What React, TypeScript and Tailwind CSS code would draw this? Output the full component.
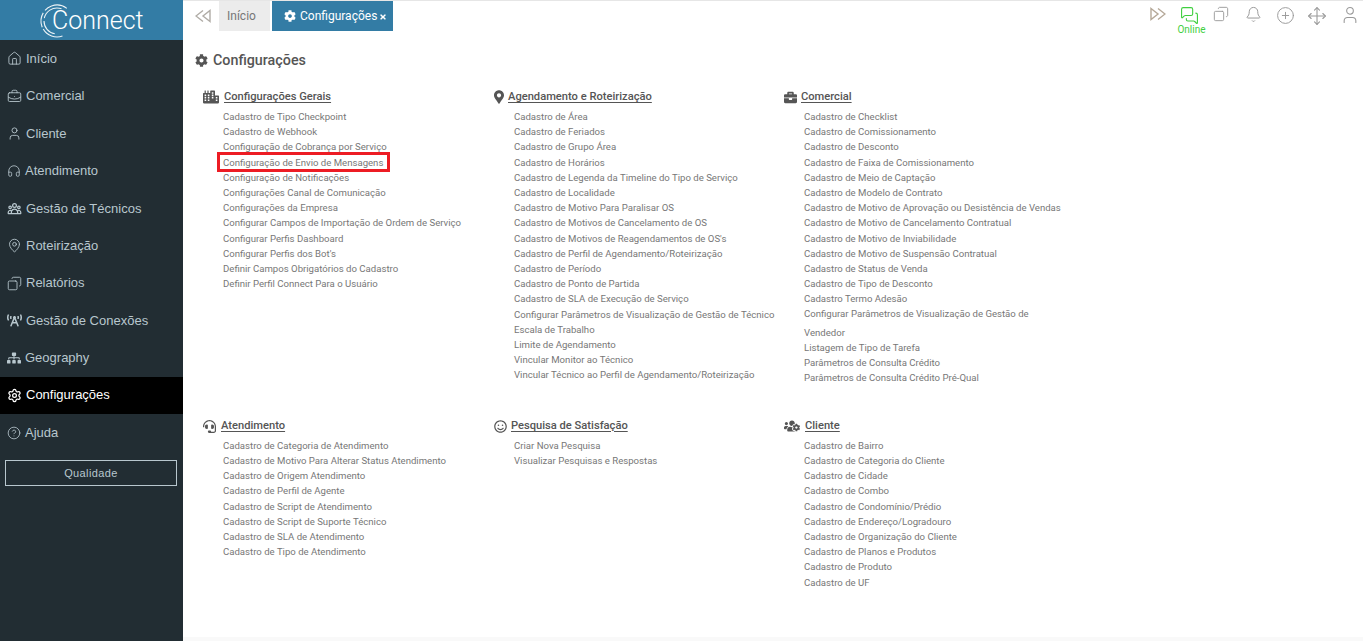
import {
  Home,
  BriefcaseBusiness,
  User,
  Headphones,
  MapPin,
  Copy,
  Settings,
  CircleHelp,
  MessagesSquare,
  Bell,
  CirclePlus,
  Move,
} from "lucide-react";
import {
  FaCog,
  FaCity,
  FaMapMarkerAlt,
  FaBriefcase,
  FaUsersCog,
  FaRegSmile,
  FaHeadset,
  FaTimes,
  FaSitemap,
  FaBroadcastTower,
} from "react-icons/fa";
import { HiOutlineUserGroup } from "react-icons/hi";

const menu = [
  { label: "Início", icon: <Home size={15} strokeWidth={1.4} /> },
  { label: "Comercial", icon: <BriefcaseBusiness size={15} strokeWidth={1.4} /> },
  { label: "Cliente", icon: <User size={15} strokeWidth={1.4} /> },
  { label: "Atendimento", icon: <Headphones size={14} strokeWidth={1.4} /> },
  { label: "Gestão de Técnicos", icon: <HiOutlineUserGroup size={15} /> },
  { label: "Roteirização", icon: <MapPin size={15} strokeWidth={1.4} /> },
  { label: "Relatórios", icon: <Copy size={15} strokeWidth={1.4} className="scale-x-[-1]" /> },
  { label: "Gestão de Conexões", icon: <FaBroadcastTower size={15} /> },
  { label: "Geography", icon: <FaSitemap size={14} /> },
  { label: "Configurações", icon: <Settings size={15} strokeWidth={2} />, active: true },
  { label: "Ajuda", icon: <CircleHelp size={14} strokeWidth={1.4} /> },
];

const sections = [
  {
    title: "Configurações Gerais",
    icon: <FaCity size={16} />,
    links: [
      "Cadastro de Tipo Checkpoint",
      "Cadastro de Webhook",
      "Configuração de Cobrança por Serviço",
      "Configuração de Envio de Mensagens",
      "Configuração de Notificações",
      "Configurações Canal de Comunicação",
      "Configurações da Empresa",
      "Configurar Campos de Importação de Ordem de Serviço",
      "Configurar Perfis Dashboard",
      "Configurar Perfis dos Bot's",
      "Definir Campos Obrigatórios do Cadastro",
      "Definir Perfil Connect Para o Usuário",
    ],
  },
  {
    title: "Agendamento e Roteirização",
    icon: <FaMapMarkerAlt className="-mr-px h-[14px] w-[10px]" />,
    links: [
      "Cadastro de Área",
      "Cadastro de Feriados",
      "Cadastro de Grupo Área",
      "Cadastro de Horários",
      "Cadastro de Legenda da Timeline do Tipo de Serviço",
      "Cadastro de Localidade",
      "Cadastro de Motivo Para Paralisar OS",
      "Cadastro de Motivos de Cancelamento de OS",
      "Cadastro de Motivos de Reagendamentos de OS's",
      "Cadastro de Perfil de Agendamento/Roteirização",
      "Cadastro de Período",
      "Cadastro de Ponto de Partida",
      "Cadastro de SLA de Execução de Serviço",
      "Configurar Parâmetros de Visualização de Gestão de Técnico",
      "Escala de Trabalho",
      "Limite de Agendamento",
      "Vincular Monitor ao Técnico",
      "Vincular Técnico ao Perfil de Agendamento/Roteirização",
    ],
  },
  {
    title: "Comercial",
    icon: <FaBriefcase size={13} className="-mr-px" />,
    links: [
      "Cadastro de Checklist",
      "Cadastro de Comissionamento",
      "Cadastro de Desconto",
      "Cadastro de Faixa de Comissionamento",
      "Cadastro de Meio de Captação",
      "Cadastro de Modelo de Contrato",
      "Cadastro de Motivo de Aprovação ou Desistência de Vendas",
      "Cadastro de Motivo de Cancelamento Contratual",
      "Cadastro de Motivo de Inviabilidade",
      "Cadastro de Motivo de Suspensão Contratual",
      "Cadastro de Status de Venda",
      "Cadastro de Tipo de Desconto",
      "Cadastro Termo Adesão",
      "Configurar Parâmetros de Visualização de Gestão de Vendedor",
      "Listagem de Tipo de Tarefa",
      "Parâmetros de Consulta Crédito",
      "Parâmetros de Consulta Crédito Pré-Qual",
    ],
  },
  {
    title: "Atendimento",
    icon: <FaHeadset size={13} />,
    links: [
      "Cadastro de Categoria de Atendimento",
      "Cadastro de Motivo Para Alterar Status Atendimento",
      "Cadastro de Origem Atendimento",
      "Cadastro de Perfil de Agente",
      "Cadastro de Script de Atendimento",
      "Cadastro de Script de Suporte Técnico",
      "Cadastro de SLA de Atendimento",
      "Cadastro de Tipo de Atendimento",
    ],
  },
  {
    title: "Pesquisa de Satisfação",
    icon: <FaRegSmile size={13} className="-mr-px" />,
    links: ["Criar Nova Pesquisa", "Visualizar Pesquisas e Respostas"],
  },
  {
    title: "Cliente",
    icon: <FaUsersCog size={16} />,
    links: [
      "Cadastro de Bairro",
      "Cadastro de Categoria do Cliente",
      "Cadastro de Cidade",
      "Cadastro de Combo",
      "Cadastro de Condomínio/Prédio",
      "Cadastro de Endereço/Logradouro",
      "Cadastro de Organização do Cliente",
      "Cadastro de Planos e Produtos",
      "Cadastro de Produto",
      "Cadastro de UF",
    ],
  },
];

const DoubleArrow = ({ left }: { left?: boolean }) => (
  <svg width="16" height="16" viewBox="0 0 16 16" fill="none" stroke="currentColor" strokeWidth="1.4" className={left ? "rotate-180" : ""}>
    <path d="M1 2.5 L8 8 L1 13.5 Z" />
    <path d="M8 2.5 L15 8 L8 13.5" />
  </svg>
);

const App = () => {
  return (
    <div className="flex h-[641px] overflow-hidden bg-white font-['Roboto',sans-serif]">
      <aside className="w-[183px] shrink-0 bg-[#222d33] font-['Liberation_Sans',sans-serif]">
        <div className="relative flex h-10 items-center bg-[#337ca5] pl-[52px] font-['Roboto',sans-serif] text-[25px] font-light leading-none text-white">
          <svg width="40" height="40" viewBox="0 0 40 40" fill="none" stroke="#fff" className="absolute left-[37px] top-[1px] opacity-90">
            <circle cx="20" cy="20" r="16" strokeWidth="1.1" strokeDasharray="22 2 15 3 24 35" transform="rotate(70 20 20)" />
            <circle cx="20" cy="20" r="13" strokeWidth="1.1" strokeDasharray="18 3 22 40" transform="rotate(100 20 20)" />
          </svg>
          <span className="relative">Connect</span>
        </div>
        <nav>
          {menu.map((m) => (
            <div
              key={m.label}
              className={`flex h-[37.4px] items-center gap-[4px] pl-[7px] text-[13px] ${
                m.active ? "bg-black text-white" : "text-[#b8c7ce]"
              }`}
            >
              {m.icon}
              <span>{m.label}</span>
            </div>
          ))}
        </nav>
        <div className="ml-[5px] mr-[6px] mt-[9px] flex h-[26px] items-center justify-center border border-[#b8c7ce] text-[11px] tracking-[0.4px] text-[#b8c7ce]">
          Qualidade
        </div>
      </aside>

      <main className="flex min-w-0 flex-1 flex-col">
        <header className="flex h-[31px] shrink-0 items-start border-t border-[#e6e6e6] pl-[12px]">
          <span className="mt-[7px] text-[#b0aca6]">
            <DoubleArrow left />
          </span>
          <div className="ml-[8px] flex h-[30px] w-[51px] items-center bg-[#ececec] pl-2 text-xs text-[#777]">Início</div>
          <div className="ml-[2px] flex h-[30px] w-[121px] items-center gap-[4px] bg-[#337ca5] pl-3 text-xs text-white">
            <FaCog size={12} />
            <span>Configurações</span>
            <FaTimes size={8} className="-ml-[2px] mt-[2px]" />
          </div>
          <div className="ml-auto flex items-start pr-[3px] pt-[5px] text-[#999]">
            <span className="text-[#b5a898]"><DoubleArrow /></span>
            <span className="ml-[12px] flex w-[27px] flex-col items-center text-[#3fcf3f]">
              <MessagesSquare size={19} strokeWidth={1.4} className="-ml-[4px]" />
              <span className="-mt-[1px] text-[10px] leading-[12px]">Online</span>
            </span>
            <Copy size={16} strokeWidth={1.4} className="ml-[8px] scale-x-[-1]" />
            <Bell size={17} strokeWidth={1.4} className="ml-[16px]" />
            <CirclePlus size={19} strokeWidth={1.2} className="ml-[14px]" />
            <Move size={20} strokeWidth={1.3} className="ml-[12px]" />
            <User size={20} strokeWidth={1.3} className="ml-[13px] -mt-[1px]" />
          </div>
        </header>

        <div className="flex-1 border-b-[4px] border-[#f9f9f9] pl-[12px]">
          <h1 className="mt-[19px] flex items-center gap-[5px] text-[14.3px] font-medium text-[#555]">
            <FaCog size={13} />
            Configurações
          </h1>
          <div className="mt-[18px] grid grid-cols-[291px_290px_291px] pl-[8px]">
            {sections.map((s, i) => (
              <section key={s.title} className={i >= 3 ? "mt-[32.5px]" : ""}>
                <div className="flex h-[16px] items-center gap-[5px] text-[#555]">
                  {s.icon}
                  <span className="text-[11.15px] font-medium underline underline-offset-2">{s.title}</span>
                </div>
                <ul className="mt-[3.5px] pl-[20px] pr-[8px] text-[9.6px] leading-[15.2px] text-[#777]">
                  {s.links.map((l) => {
                    if (l === "Configuração de Envio de Mensagens") {
                      return (
                        <li key={l}>
                          <span className="relative inline-block">
                            {l}
                            <span className="absolute -bottom-[2px] -left-[6px] -right-[7px] -top-[3px] border-[3px] border-[#ed1c24]" />
                          </span>
                        </li>
                      );
                    }
                    if (l.endsWith("Gestão de Vendedor")) {
                      return (
                        <li key={l} className="-mb-[2px] -mt-[1.5px] leading-[18.5px]">
                          {l}
                        </li>
                      );
                    }
                    return <li key={l}>{l}</li>;
                  })}
                </ul>
              </section>
            ))}
          </div>
        </div>
      </main>
    </div>
  );
};

export default App;
